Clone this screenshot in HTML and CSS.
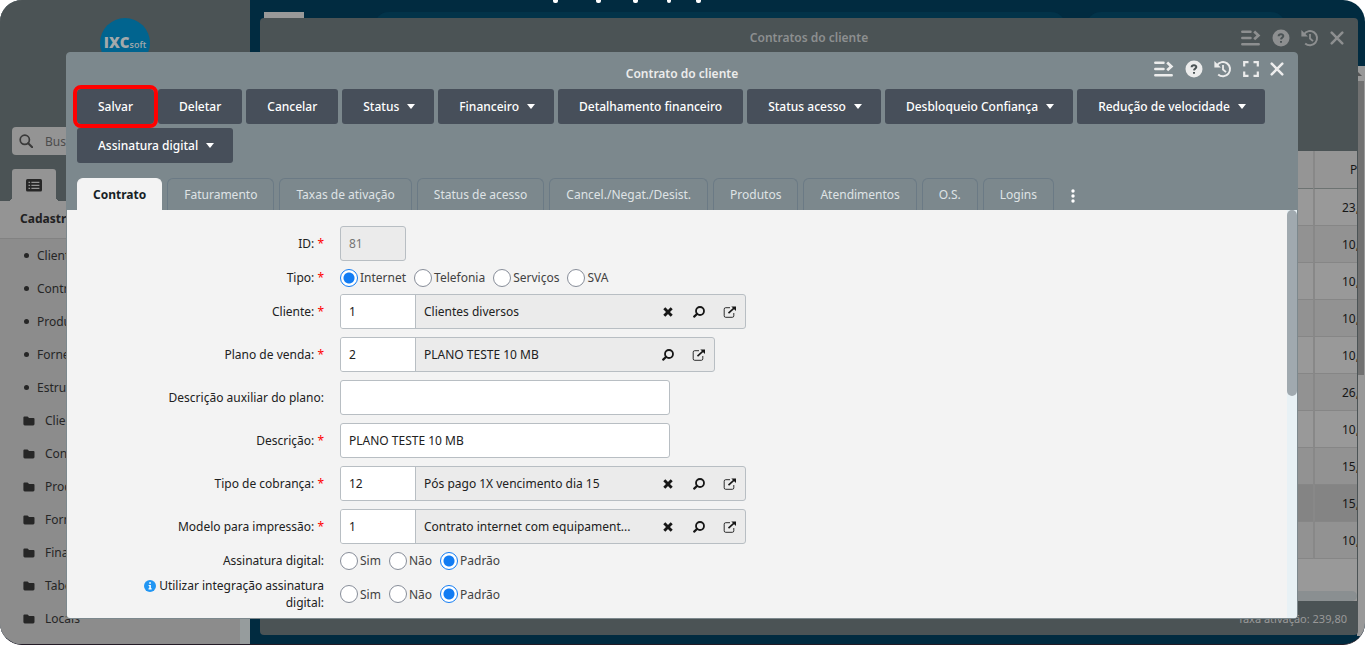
FILE: index.html
```html
<!DOCTYPE html>
<html lang="pt-BR">
<head>
<meta charset="utf-8">
<title>Contrato do cliente</title>
<link rel="stylesheet" href="styles.css">
</head>
<body>
<svg class="defs" aria-hidden="true">
  <symbol id="i-list" viewBox="0 0 20 16"><path d="M1.300 1.800h8.200M1.300 8h8.200M1.300 14.200h16.400" fill="none" stroke="currentColor" stroke-width="2.500" stroke-linecap="round"/><path d="M13.200 1.500l4.200 3.900-4.200 3.900" fill="none" stroke="currentColor" stroke-width="2.700"/></symbol>
  <symbol id="i-help" viewBox="0 0 18 18"><circle cx="9" cy="9" r="8.500" fill="currentColor"/><path class="cut" d="M6.600 7.200C6.800 4.500 11.500 4.700 11.300 7.200 11.200 8.600 9.100 8.700 9 10.400M9 11.900v1.900" fill="none" stroke-width="2"/></symbol>
  <symbol id="i-history" viewBox="0 0 18 18"><path d="M3 5.200A7.100 7.100 0 1 1 4.200 14.400" fill="none" stroke="currentColor" stroke-width="2"/><path d="M.4 1v6.500h6.500z" fill="currentColor"/><path d="M9 5v4.500l3 2.700" fill="none" stroke="currentColor" stroke-width="1.800"/></symbol>
  <symbol id="i-expand" viewBox="0 0 16 16"><path d="M1.200 5.500V1.200h4.300M10.500 1.200h4.300v4.300M14.800 10.500v4.300h-4.300M5.500 14.800H1.200v-4.300" fill="none" stroke="currentColor" stroke-width="2.200"/></symbol>
  <symbol id="i-close" viewBox="0 0 14 14"><path d="M1.700 1.700l10.600 10.600M12.300 1.700L1.700 12.300" fill="none" stroke="currentColor" stroke-width="2.500" stroke-linecap="round"/></symbol>
  <symbol id="i-search" viewBox="0 0 14 14"><circle cx="5.800" cy="5.800" r="4.600" fill="none" stroke="currentColor" stroke-width="1.700"/><path d="M9.200 9.200l4 4" stroke="currentColor" stroke-width="2" stroke-linecap="round"/></symbol>
  <symbol id="i-find" viewBox="0 0 12 12"><circle cx="7" cy="5" r="4" fill="none" stroke="currentColor" stroke-width="1.800"/><path d="M4.200 7.800L1.200 10.600" stroke="currentColor" stroke-width="2.200" stroke-linecap="round"/></symbol>
  <symbol id="i-clear" viewBox="0 0 10 10"><path d="M1.300 1.300l7.400 7.400M8.700 1.300L1.300 8.700" stroke="currentColor" stroke-width="2.900"/></symbol>
  <symbol id="i-open" viewBox="0 0 14 12"><path d="M7 1.700H2.700Q1.200 1.700 1.200 3.200v6.600q0 1.500 1.500 1.500h6.600q1.500 0 1.500-1.500V7" fill="none" stroke="currentColor" stroke-width=".9"/><path d="M5.500 7.200l5.500-5" stroke="currentColor" stroke-width="1.600"/><path d="M8.300.4H13v4.700z" fill="currentColor"/></symbol>
  <symbol id="i-folder" viewBox="0 0 12 10"><path d="M1.500.5h3l1.600 1.600h4.400q1 0 1 1v5q0 1.400-1.400 1.400H1.800Q.4 9.500.4 8.100V1.600Q.4.500 1.500.5z" fill="currentColor"/></symbol>
</svg>

<div class="screen">
  <aside class="sidebar">
    <div class="side-head">
      <div class="logo"><b>IXC</b><span>soft</span></div>
      <label class="side-search">
        <svg width="14" height="14"><use href="#i-search"/></svg>
        <input type="search" placeholder="Buscar" aria-label="Buscar">
      </label>
      <button class="side-tab" aria-label="Menu">
        <svg width="16" height="13" viewBox="0 0 16 13"><rect width="16" height="12.500" rx="1.500" fill="#262626"/><path d="M2.500 3.300h1.600M2.500 6.300h1.600M2.500 9.300h1.600M5.400 3.300h8M5.400 6.300h8M5.400 9.300h8" stroke="#949494" stroke-width="1.300"/></svg>
      </button>
    </div>
    <h2 class="side-title">Cadastros</h2>
    <nav class="side-menu">
      <a href="#"><i class="dot"></i>Clientes</a>
      <a href="#"><i class="dot"></i>Contratos</a>
      <a href="#"><i class="dot"></i>Produtos</a>
      <a href="#"><i class="dot"></i>Fornecedores</a>
      <a href="#"><i class="dot"></i>Estrutura</a>
      <a href="#" class="folder"><svg width="12" height="10"><use href="#i-folder"/></svg>Clientes</a>
      <a href="#" class="folder"><svg width="12" height="10"><use href="#i-folder"/></svg>Contratos</a>
      <a href="#" class="folder"><svg width="12" height="10"><use href="#i-folder"/></svg>Produtos</a>
      <a href="#" class="folder"><svg width="12" height="10"><use href="#i-folder"/></svg>Fornecedores</a>
      <a href="#" class="folder"><svg width="12" height="10"><use href="#i-folder"/></svg>Financeiro</a>
      <a href="#" class="folder"><svg width="12" height="10"><use href="#i-folder"/></svg>Tabelas</a>
      <a href="#" class="folder"><svg width="12" height="10"><use href="#i-folder"/></svg>Locais</a>
    </nav>
  </aside>

  <main class="desk">
    <div class="desk-top">
      <svg class="desk-marks" width="150" height="4" viewBox="0 0 150 4" aria-hidden="true"><g fill="#fff"><rect x="0" y="-3" width="5" height="6" rx="2"/><rect x="43" y="-3" width="5" height="6" rx="2"/><rect x="80" y="-3" width="5" height="6" rx="2"/><rect x="114" y="-3" width="4" height="6" rx="2"/><rect x="143" y="-3" width="5" height="6" rx="2"/></g></svg>
      <div class="desk-cards"><span class="card-a"></span><span class="card-b"></span><span class="card-c"></span></div>
    </div>
    <div class="desk-scroll">
      <svg width="8" height="15" viewBox="0 0 8 15"><path d="M0 10V5l5 5z" fill="#555"/></svg>
      <span class="desk-thumb"></span>
    </div>
  </main>

  <section class="window back">
    <header class="back-head">
      <h2 class="title">Contratos do cliente</h2>
      <div class="tools">
        <button aria-label="Lista"><svg width="20" height="16"><use href="#i-list"/></svg></button>
        <button aria-label="Ajuda"><svg width="18" height="18"><use href="#i-help"/></svg></button>
        <button aria-label="Histórico"><svg width="18" height="18"><use href="#i-history"/></svg></button>
        <button aria-label="Fechar"><svg width="14" height="14"><use href="#i-close"/></svg></button>
      </div>
    </header>
    <div class="grid">
      <table>
        <thead><tr><th></th><th class="val">P</th></tr></thead>
        <tbody>
          <tr><td></td><td class="val">23,</td></tr>
          <tr><td></td><td class="val">10,</td></tr>
          <tr><td></td><td class="val">10,</td></tr>
          <tr><td></td><td class="val">10,</td></tr>
          <tr><td></td><td class="val">10,</td></tr>
          <tr><td></td><td class="val">26,</td></tr>
          <tr><td></td><td class="val">10,</td></tr>
          <tr><td></td><td class="val">15,</td></tr>
          <tr class="sel"><td></td><td class="val">15,</td></tr>
          <tr><td></td><td class="val">10,</td></tr>
        </tbody>
      </table>
      <div class="hscroll"></div>
    </div>
    <footer class="back-foot">Taxa ativação: 239,80</footer>
  </section>

  <section class="window front" role="dialog" aria-labelledby="dlg">
    <header class="front-head">
      <h1 class="title" id="dlg">Contrato do cliente</h1>
      <div class="tools">
        <button aria-label="Lista"><svg width="20" height="16"><use href="#i-list"/></svg></button>
        <button aria-label="Ajuda"><svg width="18" height="18"><use href="#i-help"/></svg></button>
        <button aria-label="Histórico"><svg width="18" height="18"><use href="#i-history"/></svg></button>
        <button aria-label="Expandir"><svg width="16" height="16"><use href="#i-expand"/></svg></button>
        <button aria-label="Fechar"><svg width="14" height="14"><use href="#i-close"/></svg></button>
      </div>
    </header>
    <div class="actions">
      <button class="btn marked">Salvar</button>
      <button class="btn">Deletar</button>
      <button class="btn">Cancelar</button>
      <button class="btn drop">Status</button>
      <button class="btn drop">Financeiro</button>
      <button class="btn">Detalhamento financeiro</button>
      <button class="btn drop">Status acesso</button>
      <button class="btn drop">Desbloqueio Confiança</button>
      <button class="btn drop">Redução de velocidade</button>
      <button class="btn drop">Assinatura digital</button>
    </div>
    <div class="tabs" role="tablist">
      <button class="tab active" role="tab">Contrato</button>
      <button class="tab" role="tab">Faturamento</button>
      <button class="tab" role="tab">Taxas de ativação</button>
      <button class="tab" role="tab">Status de acesso</button>
      <button class="tab" role="tab">Cancel./Negat./Desist.</button>
      <button class="tab" role="tab">Produtos</button>
      <button class="tab" role="tab">Atendimentos</button>
      <button class="tab" role="tab">O.S.</button>
      <button class="tab" role="tab">Logins</button>
      <button class="more" aria-label="Mais"><svg width="4" height="14" viewBox="0 0 4 14"><g fill="#fff"><circle cx="2" cy="2" r="1.700"/><circle cx="2" cy="7" r="1.700"/><circle cx="2" cy="12" r="1.700"/></g></svg></button>
    </div>
    <div class="content">
      <form class="form">
        <div class="row"><label class="lbl" for="id">ID: <em>*</em></label><input class="box short" id="id" value="81" disabled></div>
        <div class="row"><span class="lbl">Tipo: <em>*</em></span>
          <div class="radios">
            <label><input type="radio" name="tipo" checked>Internet</label>
            <label><input type="radio" name="tipo">Telefonia</label>
            <label><input type="radio" name="tipo">Serviços</label>
            <label><input type="radio" name="tipo">SVA</label>
          </div></div>
        <div class="row"><label class="lbl" for="cli">Cliente: <em>*</em></label>
          <div class="lookup"><input id="cli" value="1"><span class="name">Clientes diversos</span>
            <button type="button" aria-label="Limpar"><svg width="10" height="10"><use href="#i-clear"/></svg></button>
            <button type="button" aria-label="Buscar"><svg width="12" height="12"><use href="#i-find"/></svg></button>
            <button type="button" aria-label="Abrir"><svg width="14" height="12"><use href="#i-open"/></svg></button></div></div>
        <div class="row"><label class="lbl" for="pla">Plano de venda: <em>*</em></label>
          <div class="lookup"><input id="pla" value="2"><span class="name">PLANO TESTE 10 MB</span>
            <button type="button" aria-label="Buscar"><svg width="12" height="12"><use href="#i-find"/></svg></button>
            <button type="button" aria-label="Abrir"><svg width="14" height="12"><use href="#i-open"/></svg></button></div></div>
        <div class="row"><label class="lbl" for="aux">Descrição auxiliar do plano:</label><input class="box" id="aux"></div>
        <div class="row"><label class="lbl" for="des">Descrição: <em>*</em></label><input class="box" id="des" value="PLANO TESTE 10 MB"></div>
        <div class="row"><label class="lbl" for="cob">Tipo de cobrança: <em>*</em></label>
          <div class="lookup"><input id="cob" value="12"><span class="name">Pós pago 1X vencimento dia 15</span>
            <button type="button" aria-label="Limpar"><svg width="10" height="10"><use href="#i-clear"/></svg></button>
            <button type="button" aria-label="Buscar"><svg width="12" height="12"><use href="#i-find"/></svg></button>
            <button type="button" aria-label="Abrir"><svg width="14" height="12"><use href="#i-open"/></svg></button></div></div>
        <div class="row"><label class="lbl" for="mod">Modelo para impressão: <em>*</em></label>
          <div class="lookup"><input id="mod" value="1"><span class="name">Contrato internet com equipament...</span>
            <button type="button" aria-label="Limpar"><svg width="10" height="10"><use href="#i-clear"/></svg></button>
            <button type="button" aria-label="Buscar"><svg width="12" height="12"><use href="#i-find"/></svg></button>
            <button type="button" aria-label="Abrir"><svg width="14" height="12"><use href="#i-open"/></svg></button></div></div>
        <div class="row"><span class="lbl">Assinatura digital:</span>
          <div class="radios">
            <label><input type="radio" name="ass">Sim</label>
            <label><input type="radio" name="ass">Não</label>
            <label><input type="radio" name="ass" checked>Padrão</label>
          </div></div>
        <div class="row"><span class="lbl"><svg class="info" width="12" height="12" viewBox="0 0 12 12"><circle cx="6" cy="6" r="6" fill="#2196f3"/><path d="M5.200 2.300h1.700v1.400H5.200zM4.600 5h2.300v3.200h.8v1.200H4.500V8.200h.8V6.100h-.7z" fill="#fff"/></svg> Utilizar integração assinatura digital:</span>
          <div class="radios">
            <label><input type="radio" name="int">Sim</label>
            <label><input type="radio" name="int">Não</label>
            <label><input type="radio" name="int" checked>Padrão</label>
          </div></div>
      </form>
      <div class="vscroll"><span></span></div>
    </div>
  </section>
</div>
</body>
</html>
```
FILE: styles.css
```css
* { box-sizing: border-box; }
body { margin: 0; background: #fff; color: #212121; font: 12px/17px "Noto Sans", "Open Sans", sans-serif; }
button, input { font: inherit; color: inherit; }
button { border: 0; padding: 0; background: none; }
svg { display: block; flex: none; }
h1, h2 { margin: 0; }
.defs { position: absolute; width: 0; height: 0; }

.screen { position: relative; display: flex; height: 100vh; overflow: hidden; border-radius: 22px; border-bottom: 1px solid #231b26; background: #012b40; }

/* sidebar */
.sidebar { display: flex; flex-direction: column; width: 250px; flex: none; background: #8c8c8c; }
.side-head { display: flex; flex-direction: column; height: 201px; padding: 18px 12px 0; background: #4b5355; }
.logo { display: flex; align-self: center; align-items: baseline; justify-content: center; width: 50px; height: 50px; border-radius: 50%; background: #01648f; color: #a3a9ab; }
.logo b { font: 800 15px/49px "Open Sans", sans-serif; }
.logo span { font: 600 9px/49px "Open Sans", sans-serif; }
.side-search { display: flex; align-items: center; gap: 12px; height: 28px; margin-top: 59px; padding: 0 7px; border-radius: 4px; background: #949494; color: #3a3a3a; }
.side-search input { width: 100%; border: 0; padding: 0; background: none; outline: 0; }
.side-search input::placeholder { color: #4c4c4c; }
.side-tab { position: relative; display: flex; align-items: center; justify-content: center; width: 44px; height: 32px; margin-top: 14px; border-radius: 3px 3px 0 0; background: #949494; }
.side-tab::before, .side-tab::after { content: ""; position: absolute; bottom: 0; width: 4px; height: 4px; }
.side-tab::before { right: 100%; background: radial-gradient(circle at 0 0, #4b5355 4px, #949494 4px); }
.side-tab::after { left: 100%; background: radial-gradient(circle at 100% 0, #4b5355 4px, #949494 4px); }
.side-title { height: 38px; padding: 0 20px; border-bottom: 1px solid #828282; background: #949494; font-size: 12px; line-height: 36px; }
.side-menu { flex: 1; border-right: 10px solid #969c9d; background: #8c8c8c; }
.side-menu a { display: flex; align-items: center; gap: 8px; height: 33px; padding-left: 24px; color: #262626; text-decoration: none; }
.dot { width: 5px; height: 5px; border-radius: 50%; background: #262626; }
.side-menu a.folder { gap: 10px; padding-left: 23px; }

/* desktop behind the windows */
.desk { display: flex; flex: 1; flex-direction: column; min-width: 0; }
.desk-top { height: 66px; flex: none; }
.desk-marks { margin-left: 303px; }
.desk-cards { display: flex; height: 30px; margin-top: 8px; padding-left: 14px; }
.card-a { width: 40px; background: #999; }
.card-b { flex: 1; margin-left: 70px; border-radius: 20px; background: #023349; }
.card-c { width: 200px; margin: 0 79px 0 20px; border-radius: 20px; background: #023349; }
.desk-scroll { align-self: flex-end; width: 8px; height: 570px; background: #999; }
.desk-thumb { display: block; width: 6px; height: 294px; margin-left: 1px; background: #717171; }

/* windows */
.window { position: absolute; display: flex; flex-direction: column; overflow: hidden; border-radius: 4px; }
.title { flex: 1; text-align: center; font-size: 12px; line-height: 17px; font-weight: 600; }
.back-head, .front-head { display: grid; align-items: start; flex: none; }
.title, .tools { grid-area: 1 / 1; }
.tools { display: flex; align-items: center; justify-self: end; gap: 11px; height: 18px; }
.cut { stroke: #4b5355; }

.back { inset: 18px 7px 9px 260px; background: #4b5355; color: #8d8f90; }
.back-head { height: 133px; padding: 11px 14px 0 0; }
.back .title { padding-left: 14px; }
.grid { flex: 1; min-height: 0; overflow: hidden; margin-right: 1px; display: flex; flex-direction: column; justify-content: space-between; background: #999; color: #171717; }
.grid table { table-layout: fixed; width: 100%; border-collapse: separate; border-spacing: 0; }
.grid th { height: 38px; border-bottom: 1px solid #6d7372; background: #959595; font-weight: 400; }
.grid td { height: 37px; border-bottom: 1px solid #868686; }
.grid tr:nth-child(even) td { background: #929292; }
.grid tr.sel td { background: #848484; }
.grid .val { width: 44px; padding: 0 0 0 27px; border-left: 2px solid #888; text-align: left; white-space: nowrap; overflow: hidden; }
.grid th.val { padding-left: 35px; }
.hscroll { height: 10px; border-radius: 0 5px 5px 0; background: #8a8f91; flex: none; }
.back-foot { height: 34px; padding: 9px 11px 0 0; text-align: right; font-size: 11px; color: #999; }

.front { inset: 52px 67px 25px 66px; border: 1px solid #7c888d; background: #7c888d; color: #ececec; }
.front .cut { stroke: #7c888d; }
.front-head { height: 36px; padding-right: 13px; }
.front .title { padding: 12px 0 0 13px; }
.front .tools { margin-top: 7px; }
.actions { display: flex; flex-wrap: wrap; gap: 4px; padding: 0 10px; }
.btn { height: 35px; padding: 0 21px; border-radius: 3px; background: #474f5a; color: #fff; font-weight: 500; }
.btn.drop { display: flex; align-items: center; gap: 8px; padding-right: 19px; }
.btn.drop::after { content: ""; border: 4px solid transparent; border-top: 5px solid #fff; border-bottom: 0; }
.btn.marked { outline: 4px solid #f00; border-radius: 4px; z-index: 1; }
.tabs { display: flex; gap: 5px; height: 47px; padding: 15px 10px 0; }
.tab { height: 32px; padding: 0 16px; border: 1px solid #6b7a85; border-bottom: 0; border-radius: 6px 6px 0 0; color: #dfe3e5; }
.tab.active { padding: 0 15px; border-color: #f3f3f3; background: #f3f3f3; color: #171f26; font-weight: 700; }
.more { padding: 4px 12px 0; }
.content { display: flex; flex: 1; min-height: 0; overflow: hidden; background: #f3f3f3; color: #212121; }
.form { display: flex; flex: 1; flex-direction: column; gap: 8px; padding-top: 16px; }
.vscroll { width: 10px; background: #e8f1f5; }
.vscroll span { display: block; height: 186px; border-radius: 5px; background: #a0a9af; }

.row { display: flex; align-items: center; gap: 16px; }
.lbl { width: 257px; padding-left: 60px; text-align: right; }
.lbl em { color: #f00; font-style: normal; }
.info { display: inline-block; vertical-align: -2px; }
.box { width: 330px; height: 35px; padding: 0 8px; border: 1px solid #b8bec3; border-radius: 3px; background: #fff; }
.box.short { width: 66px; background: #ebebeb; color: #757575; }
.lookup { display: flex; height: 35px; border: 1px solid #b8bec3; border-radius: 3px; overflow: hidden; background: #ebebeb; }
.lookup input { width: 75px; padding: 0 8px; border: 0; border-right: 1px solid #b8bec3; background: #fff; }
.lookup .name { width: 236px; padding-left: 8px; line-height: 33px; white-space: nowrap; }
.lookup button { display: flex; align-items: center; justify-content: center; width: 31px; color: #171717; }
.radios { display: flex; align-items: center; gap: 8px; height: 17px; color: #424242; }
.radios label { display: flex; align-items: center; gap: 2px; }
.radios input { appearance: none; width: 18px; height: 18px; margin: 0; border: 1px solid #878d99; border-radius: 50%; background: #fff; }
.radios input:checked { border-color: #127cf3; background: radial-gradient(circle, #127cf3 5px, #fff 6px); }
```
